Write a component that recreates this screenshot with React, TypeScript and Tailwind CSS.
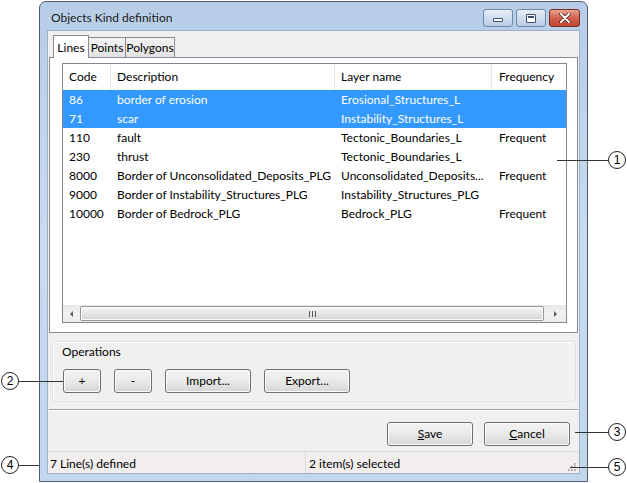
import React from "react";

type Row = {
  code: string;
  desc: string;
  layer: string;
  freq: string;
  selected?: boolean;
};

const ROWS: Row[] = [
  { code: "86", desc: "border of erosion", layer: "Erosional_Structures_L", freq: "", selected: true },
  { code: "71", desc: "scar", layer: "Instability_Structures_L", freq: "", selected: true },
  { code: "110", desc: "fault", layer: "Tectonic_Boundaries_L", freq: "Frequent" },
  { code: "230", desc: "thrust", layer: "Tectonic_Boundaries_L", freq: "" },
  { code: "8000", desc: "Border of Unconsolidated_Deposits_PLG", layer: "Unconsolidated_Deposits...", freq: "Frequent" },
  { code: "9000", desc: "Border of Instability_Structures_PLG", layer: "Instability_Structures_PLG", freq: "" },
  { code: "10000", desc: "Border of Bedrock_PLG", layer: "Bedrock_PLG", freq: "Frequent" },
];

// Win7 push button look
const btn =
  "flex items-center justify-center rounded-[3px] border border-[#707070] bg-gradient-to-b from-[#f4f4f4] via-[#e9e9e9] to-[#d6d6d6] shadow-[inset_0_0_0_1px_#fcfcfc] text-[12px] font-normal leading-none";

export default function App() {
  return (
    <div className="relative h-[483px] w-[627px] overflow-hidden bg-white font-[Lato,sans-serif] text-[12px] text-black">
      {/* window */}
      <div className="ml-[39px] mt-[1px] flex h-[481px] w-[549px] flex-col rounded-t-[7px] border border-[#4f5d6e] bg-gradient-to-b from-[#b7cde7] via-[#c9dbef] to-[#c2d6ec] px-[7px] pb-[7px]">
        <TitleBar />

        {/* client area */}
        <div className="flex flex-1 flex-col border border-[#9cb0c7] bg-[#f0f0f0] px-px">
          <Tabs />

          <div className="h-[276px] border border-[#898c95] bg-white pl-[12px] pt-[5px]">
            <ListView />
          </div>

          {/* Operations */}
          <div className="ml-[3px] mr-[2px] mt-[8px] h-[61px] rounded-[3px] border border-[#dde4e9] pl-[9px] pt-[2px] shadow-[inset_1px_1px_0_#fff]">
            <div className="leading-[15px]">Operations</div>
            <div className="mt-[10px] flex gap-[13px] pl-px">
              <button className={`${btn} h-[24px] w-[38px]`}>+</button>
              <button className={`${btn} h-[24px] w-[38px]`}>-</button>
              <button className={`${btn} h-[24px] w-[86px]`}>Import...</button>
              <button className={`${btn} h-[24px] w-[86px]`}>Export...</button>
            </div>
          </div>

          {/* separator */}
          <div className="mt-[7px] h-[2px] border-t border-[#a0a0a0] border-b border-b-white" />

          <div className="mt-[11px] flex justify-end gap-[11px] pr-[8px]">
            <button className={`${btn} h-[24px] w-[86px]`}>
              <span className="underline">S</span>ave
            </button>
            <button className={`${btn} h-[24px] w-[86px]`}>
              <span className="underline">C</span>ancel
            </button>
          </div>

          {/* status bar */}
          <div className="relative -mx-px mt-auto flex h-[22px] items-center border-t border-[#d7d7d7] bg-[#f1eeed]">
            <div className="w-[257px] pl-[2px] pt-[2px]">7 Line(s) defined</div>
            <div className="h-full w-px bg-[#dcd8d6]" />
            <div className="pl-[3px] pt-[2px]">2 item(s) selected</div>
            <Gripper />
          </div>
        </div>
      </div>

      {/* callouts */}
      <div className="absolute left-[557px] top-[160px] h-px w-[51px] bg-[#333]" />
      <div className="absolute left-[608px] top-[151px] flex h-[18px] w-[18px] items-center justify-center rounded-full border border-[#222] bg-white font-['Liberation_Sans',sans-serif] text-[12px]">1</div>

      <div className="absolute left-[19px] top-[381px] h-px w-[44px] bg-[#333]" />
      <div className="absolute left-px top-[372px] flex h-[18px] w-[18px] items-center justify-center rounded-full border border-[#222] bg-white font-['Liberation_Sans',sans-serif] text-[12px]">2</div>

      <div className="absolute left-[575px] top-[432px] h-px w-[33px] bg-[#333]" />
      <div className="absolute left-[608px] top-[423px] flex h-[18px] w-[18px] items-center justify-center rounded-full border border-[#222] bg-white font-['Liberation_Sans',sans-serif] text-[12px]">3</div>

      <div className="absolute left-[19px] top-[465px] h-px w-[20px] bg-[#333]" />
      <div className="absolute left-px top-[456px] flex h-[18px] w-[18px] items-center justify-center rounded-full border border-[#222] bg-white font-['Liberation_Sans',sans-serif] text-[12px]">4</div>

      <div className="absolute left-[570px] top-[467px] h-px w-[38px] bg-[#333]" />
      <div className="absolute left-[608px] top-[458px] flex h-[18px] w-[18px] items-center justify-center rounded-full border border-[#222] bg-white font-['Liberation_Sans',sans-serif] text-[12px]">5</div>
    </div>
  );
}

function TitleBar() {
  return (
    <div className="flex h-[28px] items-start">
      <div className="ml-[4px] mt-[8px] leading-[16px] text-[#1b1b1b]">Objects Kind definition</div>
      <div className="ml-auto mt-[7px] flex gap-[3px]">
        <div className="flex h-[18px] w-[30px] items-end justify-center rounded-[3px] border border-[#7089a8] bg-gradient-to-b from-[#e6eef8] via-[#d0deef] to-[#b9cce5] pb-[4px]">
          <div className="h-[4px] w-[10px] rounded-[1px] border border-[#3c4d66] bg-white" />
        </div>
        <div className="flex h-[18px] w-[30px] items-center justify-center rounded-[3px] border border-[#7089a8] bg-gradient-to-b from-[#e6eef8] via-[#d0deef] to-[#b9cce5]">
          <div className="h-[9px] w-[10px] rounded-[1px] border border-[#3c4d66] bg-white p-[1px]">
            <div className="h-[2px] w-full bg-[#3c4d66]" />
          </div>
        </div>
        <div className="flex h-[18px] w-[31px] items-center justify-center rounded-[3px] border border-[#7a2a22] bg-gradient-to-b from-[#e9a493] via-[#d1604f] to-[#c24434]">
          <svg width="12" height="10" viewBox="0 0 12 10" aria-hidden="true">
            <path d="M2 1l8 8M10 1L2 9" stroke="#4a1a14" strokeWidth="3.4" strokeLinecap="round" />
            <path d="M2 1l8 8M10 1L2 9" stroke="#fff" strokeWidth="2" strokeLinecap="round" />
          </svg>
        </div>
      </div>
    </div>
  );
}

function Tabs() {
  return (
    <div className="flex h-[26px] items-end pl-[4px]">
      <div className="relative z-10 -mb-px flex h-[23px] w-[36px] items-start justify-center border border-b-0 border-[#898c95] bg-white pt-[3px]">
        Lines
      </div>
      <div className="flex h-[20px] w-[37px] items-center justify-center border border-b-0 border-l-0 border-[#898c95] bg-gradient-to-b from-[#f2f2f2] to-[#e3e3e3]">
        Points
      </div>
      <div className="flex h-[20px] w-[49px] items-center justify-center border border-b-0 border-l-0 border-[#898c95] bg-gradient-to-b from-[#f2f2f2] to-[#e3e3e3]">
        Polygons
      </div>
    </div>
  );
}

function ListView() {
  const cols = "grid grid-cols-[48px_224px_157px_1fr]";
  return (
    <div className="flex h-[260px] w-[505px] flex-col border border-[#828790] bg-white">
      <div className={`${cols} h-[26px] items-center`}>
        <div className="h-full border-r border-[#e3e6ea] pl-[6px] leading-[26px]">Code</div>
        <div className="h-full border-r border-[#e3e6ea] pl-[6px] leading-[26px]">Description</div>
        <div className="h-full border-r border-[#e3e6ea] pl-[6px] leading-[26px]">Layer name</div>
        <div className="h-full pl-[7px] leading-[26px]">Frequency</div>
      </div>
      <div className="flex-1">
        {ROWS.map((r) => (
          <div
            key={r.code}
            className={`${cols} h-[19px] leading-[19px] ${r.selected ? "bg-[#3399ff] text-white" : ""}`}
          >
            <div className="pl-[6px]">{r.code}</div>
            <div className="pl-[6px]">{r.desc}</div>
            <div className="pl-[6px]">{r.layer}</div>
            <div className="pl-[7px]">{r.freq}</div>
          </div>
        ))}
      </div>
      <HScroll />
    </div>
  );
}

function HScroll() {
  return (
    <div className="flex h-[17px] items-center bg-gradient-to-b from-[#e5e5e5] via-[#f2f2f2] to-[#ececec]">
      <div className="flex h-full w-[17px] items-center justify-center">
        <div className="h-0 w-0 border-y-[3px] border-r-[3px] border-y-transparent border-r-[#5c5c5c]" />
      </div>
      <div className="flex h-[15px] w-[464px] items-center justify-center rounded-[2px] border border-[#979797] bg-gradient-to-b from-[#f5f5f5] via-[#e6e6e6] to-[#d5d5d5] shadow-[inset_0_0_0_1px_#fbfbfb]">
        <div className="flex gap-[2px]">
          <div className="h-[6px] w-px bg-[#555]" />
          <div className="h-[6px] w-px bg-[#555]" />
          <div className="h-[6px] w-px bg-[#555]" />
        </div>
      </div>
      <div className="flex h-full flex-1 items-center justify-center">
        <div className="h-0 w-0 border-y-[3px] border-l-[3px] border-y-transparent border-l-[#5c5c5c]" />
      </div>
    </div>
  );
}

function Gripper() {
  return (
    <div className="absolute bottom-[2px] right-[3px] grid grid-cols-3 gap-px">
      <div />
      <div />
      <div className="h-[2px] w-[2px] bg-[#b7b2af]" />
      <div />
      <div className="h-[2px] w-[2px] bg-[#b7b2af]" />
      <div className="h-[2px] w-[2px] bg-[#b7b2af]" />
      <div className="h-[2px] w-[2px] bg-[#b7b2af]" />
      <div className="h-[2px] w-[2px] bg-[#b7b2af]" />
      <div className="h-[2px] w-[2px] bg-[#b7b2af]" />
    </div>
  );
}
